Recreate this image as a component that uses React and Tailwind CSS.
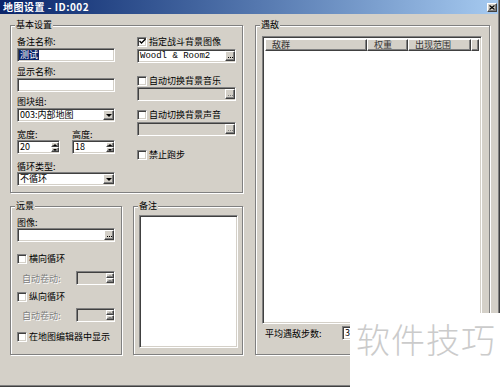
const sunken =
  "border border-t-[#808080] border-l-[#808080] border-b-white border-r-white shadow-[inset_1px_1px_0_#404040,inset_-1px_-1px_0_#d4d0c8]";
const raised =
  "border border-t-[#ffffff] border-l-[#ffffff] border-b-[#404040] border-r-[#404040] shadow-[inset_-1px_-1px_0_#808080] bg-[#d4d0c8]";

const Label = ({ children, dim, className = "" }) => (
  <div
    className={`h-[11px] text-[9px] leading-[11px] whitespace-nowrap ${
      dim ? "text-[#808080] [text-shadow:1px_1px_0_#fff]" : "text-black"
    } ${className}`}
  >
    {children}
  </div>
);

const Dots = ({ dim }) => (
  <div className="flex gap-[1px]">
    <i className={`block h-[1px] w-[1px] ${dim ? "bg-[#808080]" : "bg-black"}`} />
    <i className={`block h-[1px] w-[1px] ${dim ? "bg-[#808080]" : "bg-black"}`} />
    <i className={`block h-[1px] w-[1px] ${dim ? "bg-[#808080]" : "bg-black"}`} />
  </div>
);

const BrowseInput = ({ value, dim, mono }) => (
  <div className={`${sunken} flex h-[14px] items-center ${dim ? "bg-[#d4d0c8]" : "bg-white"}`}>
    <span
      className={`flex-1 pl-[2px] text-[9px] leading-[10px] ${
        mono ? "font-['Liberation_Mono',monospace] text-[8px]" : ""
      }`}
    >
      {value}
    </span>
    <div className={`${raised} flex h-[10px] w-[10px] items-end justify-center pb-[2px]`}>
      <Dots dim={dim} />
    </div>
  </div>
);

const Select = ({ value }) => (
  <div className={`${sunken} flex h-[14px] items-center bg-white`}>
    <span className="flex-1 pl-[2px] text-[9px] leading-[10px]">{value}</span>
    <div className={`${raised} flex h-[10px] w-[11px] items-center justify-center`}>
      <i className="block h-0 w-0 border-x-[3px] border-t-[3px] border-x-transparent border-t-black" />
    </div>
  </div>
);

const Spin = ({ value, dim, className = "" }) => (
  <div className={`${sunken} flex h-[14px] items-center ${dim ? "bg-[#d4d0c8]" : "bg-white"} ${className}`}>
    <span className="flex-1 pl-[2px] text-[9px] leading-[10px]">{value}</span>
    <div className="flex h-[10px] w-[8px] flex-col">
      <div className={`${raised} flex h-[5px] items-center justify-center`}>
        <i className={`block h-0 w-0 border-x-[2px] border-b-[2px] border-x-transparent ${dim ? "border-b-[#808080]" : "border-b-black"}`} />
      </div>
      <div className={`${raised} flex h-[5px] items-center justify-center`}>
        <i className={`block h-0 w-0 border-x-[2px] border-t-[2px] border-x-transparent ${dim ? "border-t-[#808080]" : "border-t-black"}`} />
      </div>
    </div>
  </div>
);

const Check = ({ checked, children, className = "" }) => (
  <div className={`flex h-[11px] items-center gap-[2px] ${className}`}>
    <div className={`${sunken} flex h-[10px] w-[10px] items-center justify-center bg-white`}>
      {checked && (
        <svg width="7" height="7" viewBox="0 0 7 7" className="-m-[1px]">
          <polyline points="0.5,3 2.5,5 6.5,1" fill="none" stroke="#000" strokeWidth="1.4" />
        </svg>
      )}
    </div>
    <span className="text-[9px] leading-[11px]">{children}</span>
  </div>
);

function GroupBox({ label, className = "", children }) {
  return (
    <div className={`relative border border-[#808080] shadow-[inset_1px_1px_0_#fff,1px_1px_0_#fff] ${className}`}>
      <span className="absolute left-[4px] top-[-7px] bg-[#d4d0c8] px-[1px] text-[9px] leading-[12px]">
        {label}
      </span>
      {children}
    </div>
  );
}

const HeadCell = ({ children, className = "" }) => (
  <div className={`${raised} h-[12px] pl-[6px] text-[9px] leading-[9px] text-[#333] ${className}`}>{children}</div>
);

export default function App() {
  return (
    <div className="relative h-[387px] w-[500px] overflow-hidden bg-white font-['Noto_Sans_CJK_SC','Noto_Sans',sans-serif] text-black">
      <div className="h-full w-full bg-[#404040] pb-[1px] pr-[1px]">
        <div className="h-full w-full bg-[#808080] pb-[1px] pr-[1px]">
          <div className="h-full w-full bg-[#d4d0c8]">
            {/* title bar */}
            <div className="flex h-[14px] items-start bg-gradient-to-r from-[#0a246a] to-[#a6caf0] pr-[1px]">
              <span className="flex-1 whitespace-pre pl-[3px] pt-[1px] text-[10px] font-bold leading-[12px] tracking-[0.5px] text-white">
                地图设置 - ID:002
              </span>
              <div className={`${raised} mt-[3px] flex h-[9px] w-[10px] items-center justify-center`}>
                <svg width="6" height="5" viewBox="0 0 6 5">
                  <path d="M0.5 0.5 L5.5 4.5 M5.5 0.5 L0.5 4.5" stroke="#000" strokeWidth="1.2" />
                </svg>
              </div>
            </div>

            <div className="flex gap-[12px] pl-[10px] pt-[11px]">
              <div className="flex w-[233px] flex-col">
                <GroupBox label="基本设置" className="h-[168px]">
                  <div className="flex gap-[22px] pl-[6px] pt-[10px]">
                    <div className="flex w-[98px] flex-col">
                      <Label>备注名称:</Label>
                      <div className={`${sunken} mt-[1px] flex h-[14px] items-center bg-white pl-[1px]`}>
                        <span className="bg-[#0a246a] px-[1px] text-[9px] leading-[10px] text-white">测试</span>
                      </div>
                      <Label className="mt-[4px]">显示名称:</Label>
                      <div className={`${sunken} mt-[1px] h-[14px] bg-white`} />
                      <Label className="mt-[4px]">图块组:</Label>
                      <div className="mt-[1px]">
                        <Select value="003:内部地图" />
                      </div>
                      <div className="mt-[7px] flex gap-[12px]">
                        <div className="flex w-[43px] flex-col">
                          <Label>宽度:</Label>
                          <Spin value="20" />
                        </div>
                        <div className="flex w-[43px] flex-col">
                          <Label>高度:</Label>
                          <Spin value="18" />
                        </div>
                      </div>
                      <Label className="mt-[7px]">循环类型:</Label>
                      <Select value="不循环" />
                    </div>

                    <div className="flex w-[99px] flex-col">
                      <Check checked>指定战斗背景图像</Check>
                      <div className="mt-[2px]">
                        <BrowseInput value="Woodl & Room2" mono />
                      </div>
                      <Check className="mt-[12px]">自动切换背景音乐</Check>
                      <div className="mt-[1px]">
                        <BrowseInput dim />
                      </div>
                      <Check className="mt-[8px]">自动切换背景声音</Check>
                      <div className="mt-[2px]">
                        <BrowseInput dim />
                      </div>
                      <Check className="mt-[13px]">禁止跑步</Check>
                    </div>
                  </div>
                </GroupBox>

                <div className="mt-[13px] flex gap-[11px]">
                  <GroupBox label="远景" className="h-[149px] w-[112px]">
                    <div className="flex w-[104px] flex-col pl-[6px] pt-[10px]">
                      <Label>图像:</Label>
                      <BrowseInput />
                      <Check className="mt-[11px]">横向循环</Check>
                      <div className="mt-[7px] flex items-center justify-between">
                        <Label dim className="pl-[5px]">自动卷动:</Label>
                        <Spin dim className="w-[39px]" />
                      </div>
                      <Check className="mt-[6px]">纵向循环</Check>
                      <div className="mt-[6px] flex items-center justify-between">
                        <Label dim className="pl-[5px]">自动卷动:</Label>
                        <Spin dim className="w-[39px]" />
                      </div>
                      <Check className="mt-[9px]">在地图编辑器中显示</Check>
                    </div>
                  </GroupBox>
                  <GroupBox label="备注" className="h-[149px] w-[110px]">
                    <div className="pl-[5px] pt-[8px]">
                      <div className={`${sunken} h-[133px] w-[99px] bg-white`} />
                    </div>
                  </GroupBox>
                </div>
              </div>

              <GroupBox label="遇敌" className="h-[330px] w-[235px]">
                <div className="flex flex-col pl-[6px] pt-[10px]">
                  <div className={`${sunken} flex h-[288px] w-[220px] flex-col bg-white p-[2px]`}>
                    <div className="flex">
                      <HeadCell className="w-[102px]">敌群</HeadCell>
                      <HeadCell className="w-[41px]">权重</HeadCell>
                      <HeadCell className="w-[63px] pl-[3px]">出现范围</HeadCell>
                      <HeadCell className="flex-1" />
                    </div>
                  </div>
                  <div className="mt-[2px] flex h-[14px] items-center">
                    <Label className="w-[80px] pl-[3px]">平均遇敌步数:</Label>
                    <div className={`${sunken} flex h-[14px] w-[60px] items-center bg-white pl-[2px] text-[9px] leading-[10px]`}>
                      3
                    </div>
                  </div>
                </div>
              </GroupBox>
            </div>
          </div>
        </div>
      </div>

      <div className="absolute bottom-0 right-0 flex h-[74px] w-[150px] items-start bg-white pl-[6px] pt-[4px]">
        <span className="whitespace-nowrap text-[34px] font-light leading-[44px] tracking-[1px] text-[#cbcbcb]">
          软件技巧
        </span>
      </div>
    </div>
  );
}
